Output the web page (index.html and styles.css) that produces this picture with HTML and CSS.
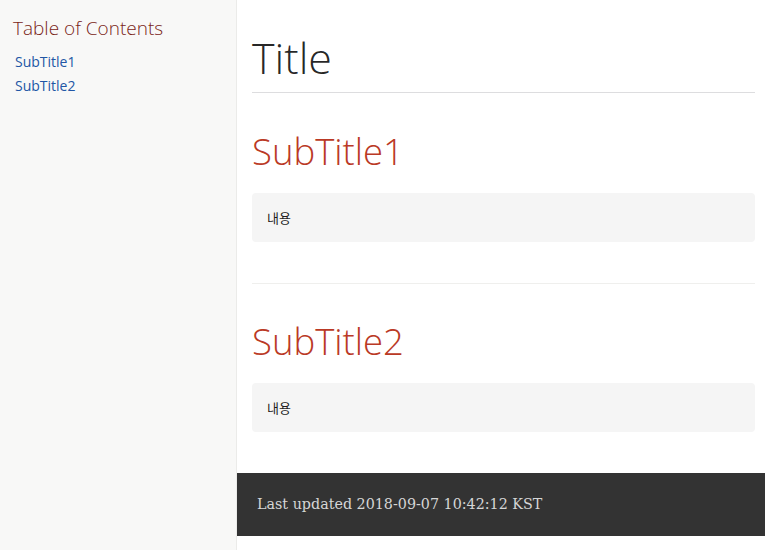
FILE: index.html
```html
<!DOCTYPE html>
<html lang="ko">
<head>
<meta charset="utf-8">
<title>Title</title>
<link rel="stylesheet" href="styles.css">
</head>
<body>
<div class="page">
  <aside class="toc">
    <div class="toc-title">Table of Contents</div>
    <ul class="toc-list">
      <li><a href="#s1">SubTitle1</a></li>
      <li><a href="#s2">SubTitle2</a></li>
    </ul>
  </aside>
  <div class="main">
    <div class="content">
      <header class="header"><h1 class="title">Title</h1></header>
      <section class="sect" id="s1">
        <h2 class="sect-title">SubTitle1</h2>
        <div class="literal">내용</div>
      </section>
      <section class="sect sect-next" id="s2">
        <h2 class="sect-title">SubTitle2</h2>
        <div class="literal">내용</div>
      </section>
    </div>
    <footer class="footer">Last updated 2018-09-07 10:42:12 KST</footer>
  </div>
</div>
</body>
</html>
```

FILE: styles.css
```css
html, body { margin: 0; padding: 0; background: #fff; }
body { font-family: "Open Sans", "DejaVu Sans", sans-serif; }
.page { display: grid; grid-template-columns: 237px 1fr; min-height: 550px; }
.toc { background: #f8f8f7; border-right: 1px solid #ebebe9; padding: 14px 0 0 13px; }
.toc-title { font-family: "Open Sans", sans-serif; font-weight: 300; font-size: 19px; line-height: 28px; color: #7a2518; }
.toc-list { list-style: none; margin: 8px 0 0 2px; padding: 0; }
.toc-list li { font-size: 14px; line-height: 24px; }
.toc-list a { color: #2156a5; text-decoration: none; }
.main { display: flex; flex-direction: column; }
.content { padding: 0 10px 0 15px; }
.header { padding-top: 31px; padding-bottom: 8px; border-bottom: 1px solid #dddddf; }
.title { margin: 0; font-family: "Open Sans", sans-serif; font-weight: 300; font-size: 43px; line-height: 53px; color: rgba(0,0,0,.85); }
.sect { padding-top: 36px; padding-bottom: 41px; }
.sect-next { padding-top: 35px; border-top: 1px solid #efefed; }
.sect-title { margin: 0 0 20px; font-family: "Open Sans", sans-serif; font-weight: 300; font-size: 36.5px; line-height: 44px; color: #ba3925; }
.literal { background: #f5f5f5; border-radius: 4px; padding: 15px; font-family: "Noto Sans CJK KR", "Noto Sans", sans-serif; font-size: 13px; line-height: 19px; color: rgba(0,0,0,.9); }
.footer { background: #333; color: #d6d6d6; font-family: "DejaVu Serif", serif; font-size: 14.3px; line-height: 23px; padding: 20px 20px; height: 23px; }
```
